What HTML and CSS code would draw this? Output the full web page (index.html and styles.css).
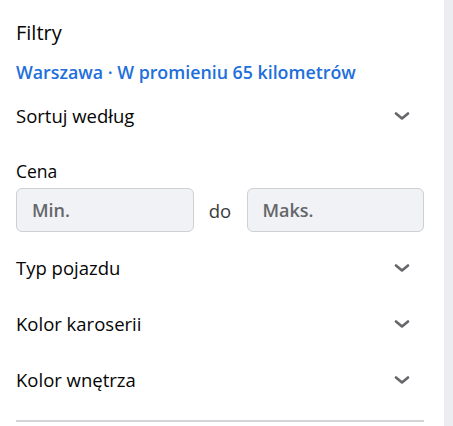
FILE: index.html
```html
<!DOCTYPE html>
<html lang="pl">
<head>
<meta charset="utf-8">
<link rel="stylesheet" href="styles.css">
</head>
<body>
<div class="page">
  <aside class="panel">
    <h2 class="title">Filtry</h2>
    <a class="location" href="#">Warszawa · W promieniu 65 kilometrów</a>
    <div class="row"><span>Sortuj według</span><svg class="chev" viewBox="0 0 16 8" width="16" height="8"><path d="M2 1.5 L8 6.5 L14 1.5" /></svg></div>
    <div class="price">
      <div class="price-label">Cena</div>
      <div class="price-inputs">
        <div class="field">Min.</div>
        <span class="to">do</span>
        <div class="field">Maks.</div>
      </div>
    </div>
    <div class="row"><span>Typ pojazdu</span><svg class="chev" viewBox="0 0 16 8" width="16" height="8"><path d="M2 1.5 L8 6.5 L14 1.5" /></svg></div>
    <div class="row"><span>Kolor karoserii</span><svg class="chev" viewBox="0 0 16 8" width="16" height="8"><path d="M2 1.5 L8 6.5 L14 1.5" /></svg></div>
    <div class="row"><span>Kolor wnętrza</span><svg class="chev" viewBox="0 0 16 8" width="16" height="8"><path d="M2 1.5 L8 6.5 L14 1.5" /></svg></div>
    <div class="divider"></div>
  </aside>
  <div class="scrollbar"></div>
</div>
</body>
</html>
```

FILE: styles.css
```css
* { box-sizing: border-box; }
html, body { margin: 0; padding: 0; background: #fff; }
body {
  font-family: "Open Sans", "Noto Sans", sans-serif;
  color: #050505;
  height: 426px;
  overflow: hidden;
}
.page {
  display: flex;
  height: 426px;
}
.panel {
  width: 444px;
  padding: 20px 20px 0 16px;
  display: flex;
  flex-direction: column;
}
.scrollbar {
  width: 9px;
  background: #ebedf0;
}
.title {
  margin: 0;
  font-size: 20px;
  font-weight: 400;
  line-height: 26px;
}
.location {
  margin-top: 16px;
  font-size: 17.8px;
  font-weight: 600;
  line-height: 20px;
  color: #216fdb;
  text-decoration: none;
}
.row {
  height: 56px;
  display: flex;
  align-items: center;
  justify-content: space-between;
  font-size: 18.5px;
  padding-right: 14px;
}
.row span { margin-top: -2px; }
.location + .row { margin-top: 6px; }
.chev path {
  fill: none;
  stroke: #65676b;
  stroke-width: 2.6;
  stroke-linecap: round;
  stroke-linejoin: round;
}
.price {
  padding: 17px 0 8px;
}
.price-label {
  font-size: 17.5px;
  line-height: 20px;
}
.price-inputs {
  margin-top: 7px;
  display: flex;
  align-items: center;
}
.field {
  flex: 1;
  height: 44px;
  border: 1px solid #ced0d4;
  border-radius: 6px;
  background: #f0f2f5;
  display: flex;
  align-items: center;
  padding-left: 15px;
  font-size: 18px;
  font-weight: 600;
  color: #65676b;
}
.to {
  width: 53px;
  text-align: center;
  font-size: 18.5px;
  color: #3a3b3c;
}
.divider {
  margin-top: 12px;
  height: 2px;
  background: #d3d5d8;
}
```
